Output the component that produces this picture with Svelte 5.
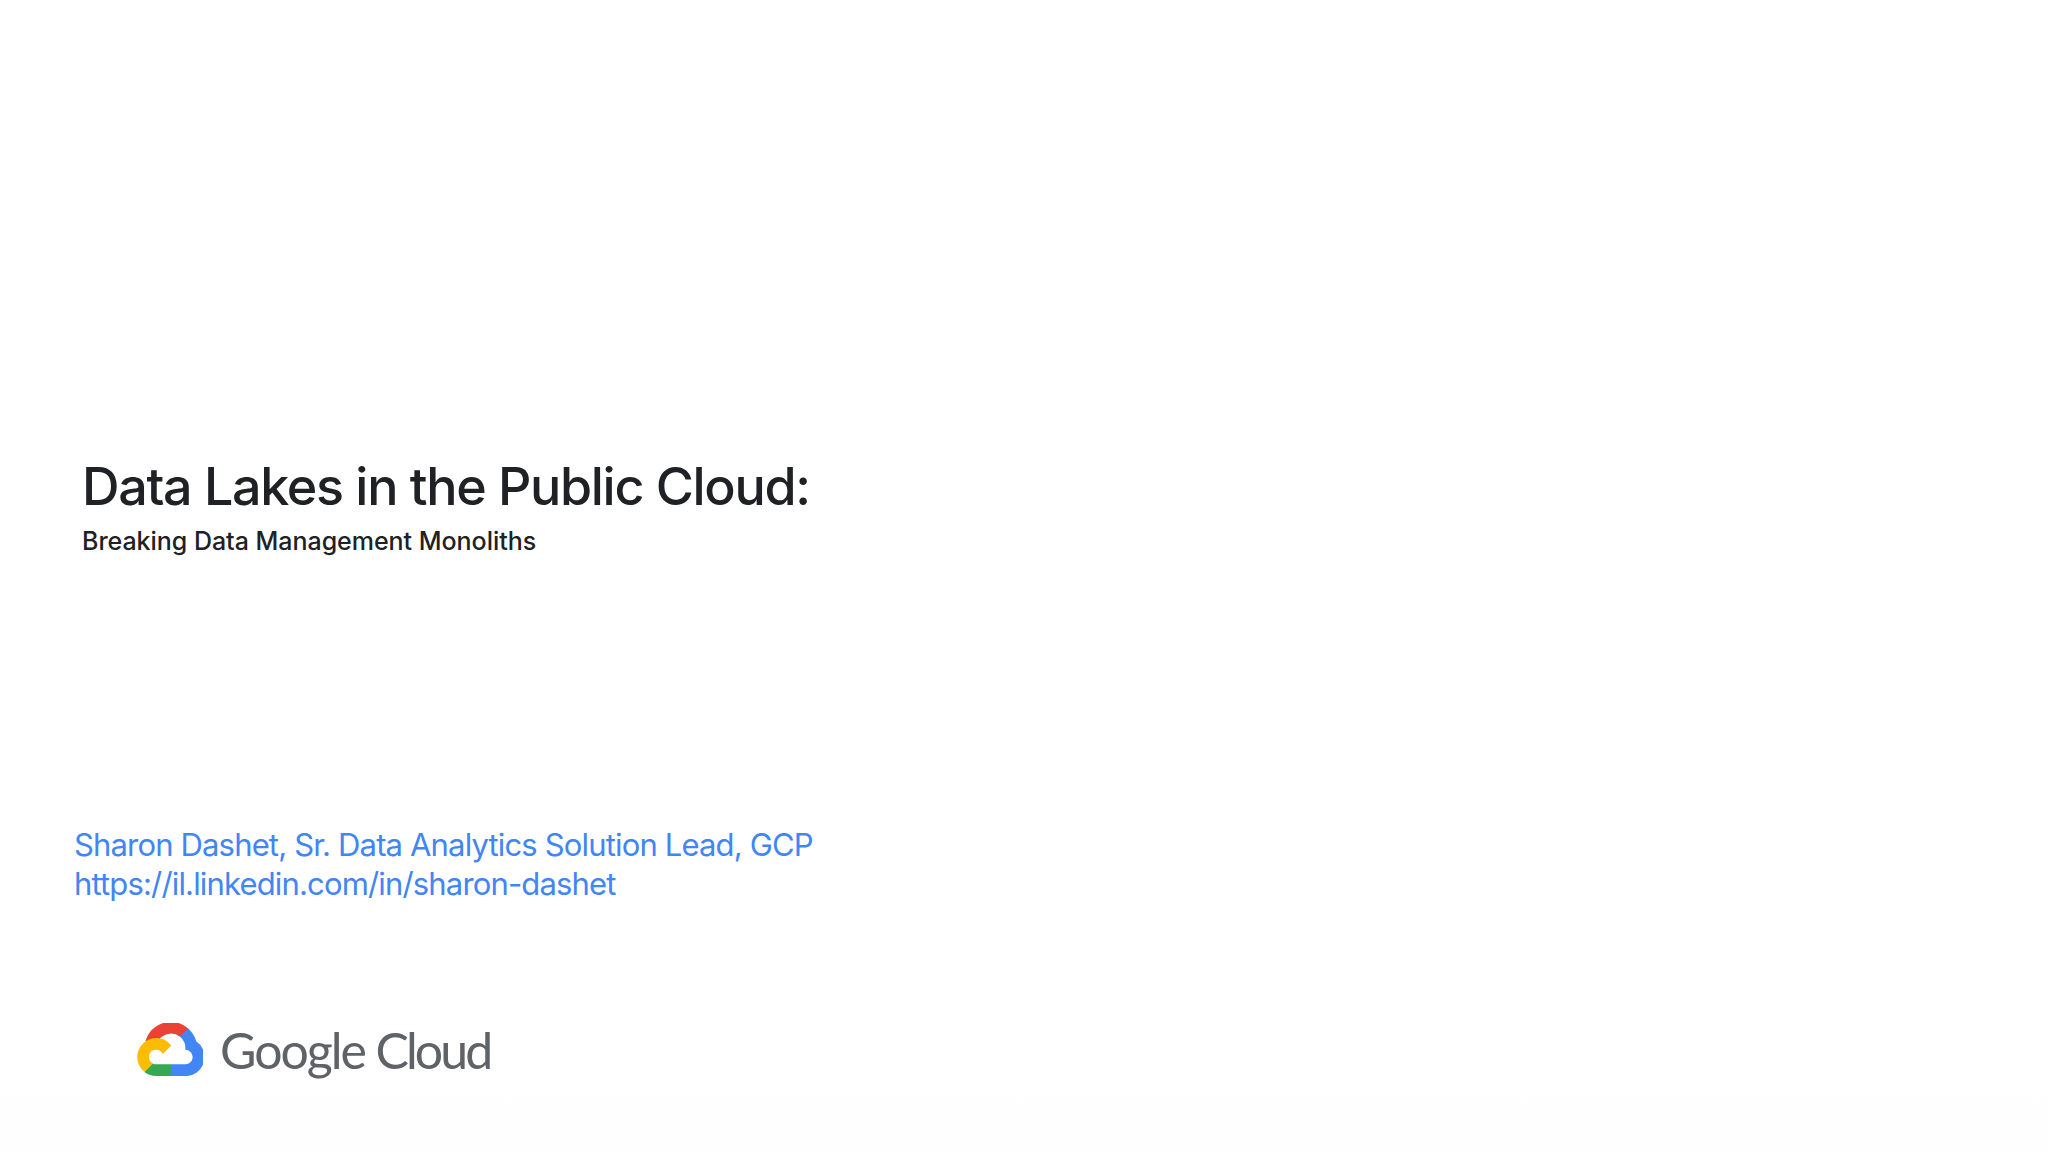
<script>
  const logoParts = [
    { fill: '#ea4335', d: 'M15.54 7.71h.76l2.16-2.16.11-.92A9.71 9.71 0 0 0 2.75 9.37c.24-.1.5-.12.76-.05l4.33-.71s.22-.36.33-.34a5.4 5.4 0 0 1 7.37-.56z' },
    { fill: '#4285f4', d: 'M21.54 9.37a9.75 9.75 0 0 0-2.94-4.74l-3.04 3.04a5.4 5.4 0 0 1 1.98 4.28v.54a2.7 2.7 0 1 1 0 5.4h-5.4l-.54.55v3.24l.54.54h5.4a7.02 7.02 0 0 0 4-12.85z' },
    { fill: '#34a853', d: 'M6.74 22.2h5.4v-4.33h-5.4a2.68 2.68 0 0 1-1.11-.24l-.76.23-2.18 2.16-.19.76a6.98 6.98 0 0 0 4.24 1.42z' },
    { fill: '#fbbc05', d: 'M6.74 8.16A7.02 7.02 0 0 0 2.5 20.75l3.13-3.13a2.7 2.7 0 1 1 3.57-3.57l3.13-3.13a7.01 7.01 0 0 0-5.59-2.76z' }
  ];
</script>

<main class="slide">
  <section class="heading">
    <h1>Data Lakes in the Public Cloud:</h1>
    <p>Breaking Data Management Monoliths</p>
  </section>
  <section class="speaker">
    <p>Sharon Dashet, Sr. Data Analytics Solution Lead, GCP</p>
    <p>https://il.linkedin.com/in/sharon-dashet</p>
  </section>
  <footer class="brand">
    <svg viewBox="-0.3 2.6 24.3 19.6" aria-hidden="true">
      {#each logoParts as part}
        <path fill={part.fill} d={part.d} />
      {/each}
    </svg>
    <span class="wordmark"><span class="google">Google</span> <span class="cloud">Cloud</span></span>
  </footer>
</main>

<style>
  :global(body) {
    margin: 0;
    background: #ffffff;
  }
  .slide {
    width: 2048px;
    height: 1152px;
    box-sizing: border-box;
    overflow: hidden;
    display: flex;
    flex-direction: column;
    font-family: Inter, "Liberation Sans", sans-serif;
    background: linear-gradient(#fff 85%, #fefefe);
  }
  .heading {
    padding: 456px 0 0 82px;
  }
  h1 {
    margin: 0;
    font-size: 52px;
    line-height: 62px;
    font-weight: 500;
    color: #202124;
    letter-spacing: -1.3px;
  }
  .heading p {
    margin: 8px 0 0;
    font-size: 25px;
    line-height: 30px;
    font-weight: 500;
    color: #202124;
    letter-spacing: -0.03px;
  }
  .speaker {
    margin: 269px 0 0 74px;
    color: #4285f4;
    font-size: 31px;
    line-height: 39px;
    letter-spacing: -0.84px;
  }
  .speaker p {
    margin: 0;
  }
  .brand {
    margin: 116px 0 0 137px;
    display: flex;
    align-items: center;
    gap: 17px;
    height: 60px;
  }
  .brand svg {
    width: 66px;
    height: 53px;
    flex: none;
  }
  .wordmark {
    font-family: Lato, "Open Sans", sans-serif;
    font-size: 50px;
    color: #5f6368;
    letter-spacing: -2.4px;
    white-space: nowrap;
    padding-top: 2px;
  }
  .google {
    letter-spacing: -2px;
  }
  .cloud {
    letter-spacing: -2.9px;
  }
</style>
